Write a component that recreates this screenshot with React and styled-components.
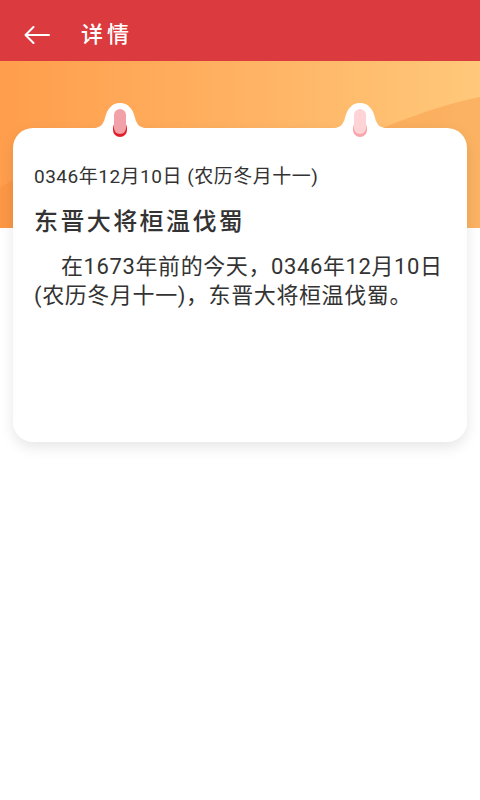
import React from "react";
import styled, { createGlobalStyle } from "styled-components";

const Global = createGlobalStyle`
  html, body {
    margin: 0;
    padding: 0;
    background: #ffffff;
  }
  body {
    font-family: Roboto, "Noto Sans CJK SC", "Noto Sans", sans-serif;
    -webkit-font-smoothing: antialiased;
  }
`;

const Page = styled.div`
  width: 480px;
  min-height: 800px;
  background: #ffffff;
  overflow: hidden;
`;

const Header = styled.header`
  height: 61px;
  background: #db3a3e;
  display: flex;
  align-items: center;
  padding: 9px 0 0 24px;
  gap: 30px;
  box-sizing: border-box;
`;

const BackButton = styled.button`
  border: 0;
  background: none;
  padding: 0;
  width: 27px;
  height: 20px;
  display: flex;
  align-items: center;
  cursor: pointer;
`;

const Title = styled.h1`
  margin: 0;
  color: #ffffff;
  font-size: 22px;
  font-weight: 500;
  letter-spacing: 4px;
  line-height: 30px;
`;

const Banner = styled.div`
  position: relative;
  height: 167px;
  background: linear-gradient(90deg, #ff9e4c 0%, #ffb060 45%, #ffc87a 100%);
  overflow: hidden;
`;

const BannerArt = styled.svg`
  position: absolute;
  inset: 0;
  width: 100%;
  height: 100%;
`;

const CardWrap = styled.div`
  position: relative;
  margin: -100px 13px 0;
`;

const Card = styled.section`
  background: #ffffff;
  border-radius: 20px;
  box-shadow: 0 5px 14px rgba(0, 0, 0, 0.1);
  height: 314px;
  box-sizing: border-box;
  padding: 36px 21px 0;
`;

const Ring = styled.svg`
  position: absolute;
  top: -25px;
  left: ${(p) => p.$left}px;
  width: 60px;
  height: 36px;
  overflow: visible;
`;

const DateLine = styled.div`
  color: #333333;
  font-size: 19px;
  line-height: 26px;
  letter-spacing: 0.5px;
`;

const EventTitle = styled.h2`
  margin: 16px 0 0;
  color: #333333;
  font-size: 24px;
  font-weight: 500;
  line-height: 32px;
  letter-spacing: 2.4px;
`;

const Body = styled.p`
  margin: 14px 0 0;
  color: #333333;
  font-size: 22px;
  line-height: 29px;
  letter-spacing: 0.6px;
  text-indent: 27px;
`;

function RingTab({ left, body, base }) {
  return (
    <Ring $left={left} viewBox="0 0 60 36">
      <path
        d="M0 25.5 C10 25.5 13 22 15 15 C17 6 22 0 30 0 C38 0 43 6 45 15 C47 22 50 25.5 60 25.5 L60 27 L0 27 Z"
        fill="#ffffff"
      />
      <rect x="23" y="18" width="14" height="16" rx="7" fill={base} />
      <rect x="24" y="6" width="12" height="25" rx="6" fill={body} />
    </Ring>
  );
}

export default function App() {
  return (
    <Page>
      <Global />
      <Header>
        <BackButton aria-label="返回">
          <svg width="26" height="18" viewBox="0 0 26 18" fill="none">
            <path
              d="M1.5 9 H25 M1.5 9 L9.5 1 M1.5 9 L9.5 17"
              stroke="#ffffff"
              strokeWidth="2"
              strokeLinecap="round"
              strokeLinejoin="round"
            />
          </svg>
        </BackButton>
        <Title>详情</Title>
      </Header>
      <Banner>
        <BannerArt viewBox="0 0 480 167" preserveAspectRatio="none">
          <path
            d="M0 127 C40 100 90 85 160 80 L160 167 L0 167 Z"
            fill="#f7893a"
            opacity="0.35"
          />
          <path
            d="M370 72 C405 58 440 44 480 36 L480 167 L370 167 Z"
            fill="#f79a48"
            opacity="0.45"
          />
        </BannerArt>
      </Banner>
      <CardWrap>
        <RingTab left={77} body="#f1a1a7" base="#e0212b" />
        <RingTab left={317} body="#fed3d6" base="#f8a5ab" />
        <Card>
          <DateLine>0346年12月10日 (农历冬月十一)</DateLine>
          <EventTitle>东晋大将桓温伐蜀</EventTitle>
          <Body>
            在1673年前的今天，0346年12月10日(农历冬月十一)，东晋大将桓温伐蜀。
          </Body>
        </Card>
      </CardWrap>
    </Page>
  );
}
